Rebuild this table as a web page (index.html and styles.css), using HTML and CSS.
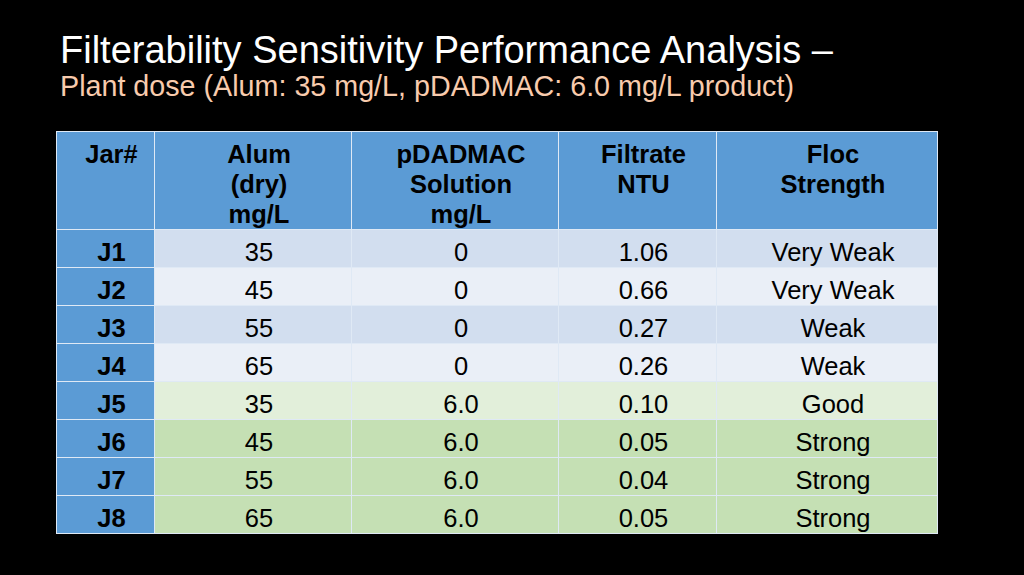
FILE: index.html
```html
<!DOCTYPE html>
<html lang="en">

<head>
    <meta charset="UTF-8">
    <title>Filterability Sensitivity Performance Analysis</title>
    <link rel="stylesheet" href="styles.css">
</head>

<body>
    <div class="slide">
        <div class="slide-title">
            <h1>Filterability Sensitivity Performance Analysis &ndash;</h1>
            <p class="subtitle">Plant dose (Alum: 35 mg/L, pDADMAC: 6.0 mg/L product)</p>
        </div>

        <table class="jar-table">
            <colgroup>
                <col class="c-jar">
                <col class="c-alum">
                <col class="c-poly">
                <col class="c-ntu">
                <col class="c-floc">
            </colgroup>
            <thead>
                <tr>
                    <th>Jar#</th>
                    <th>Alum<br>(dry)<br>mg/L</th>
                    <th>pDADMAC<br>Solution<br>mg/L</th>
                    <th>Filtrate<br>NTU</th>
                    <th>Floc<br>Strength</th>
                </tr>
            </thead>
            <tbody>
                <tr class="row-a"><th>J1</th><td>35</td><td>0</td><td>1.06</td><td>Very Weak</td></tr>
                <tr class="row-b"><th>J2</th><td>45</td><td>0</td><td>0.66</td><td>Very Weak</td></tr>
                <tr class="row-a"><th>J3</th><td>55</td><td>0</td><td>0.27</td><td>Weak</td></tr>
                <tr class="row-b"><th>J4</th><td>65</td><td>0</td><td>0.26</td><td>Weak</td></tr>
                <tr class="row-good"><th>J5</th><td>35</td><td>6.0</td><td>0.10</td><td>Good</td></tr>
                <tr class="row-strong"><th>J6</th><td>45</td><td>6.0</td><td>0.05</td><td>Strong</td></tr>
                <tr class="row-strong"><th>J7</th><td>55</td><td>6.0</td><td>0.04</td><td>Strong</td></tr>
                <tr class="row-strong"><th>J8</th><td>65</td><td>6.0</td><td>0.05</td><td>Strong</td></tr>
            </tbody>
        </table>
    </div>
</body>

</html>
```

FILE: styles.css
```css
body {
    margin: 0;
    background-color: #000;
    font-family: 'Liberation Sans', Arial, sans-serif;
}

.slide {
    width: 1024px;
    height: 575px;
    padding: 32px 0 0 60px;
    box-sizing: border-box;
}

.slide-title h1 {
    margin: 0;
    font-size: 38px;
    font-weight: normal;
    line-height: 36px;
    color: #fff;
}

.subtitle {
    margin: 2px 0 0 0;
    font-size: 28.7px;
    line-height: 32px;
    color: #f8cbad;
}

.jar-table {
    margin: 29px 0 0 -4px;
    width: 881px;
    table-layout: fixed;
    border-collapse: collapse;
    color: #000;
    font-size: 25.5px;
}

.c-jar { width: 98px; }
.c-alum { width: 197px; }
.c-poly { width: 207px; }
.c-ntu { width: 158px; }
.c-floc { width: 221px; }

.jar-table th,
.jar-table td {
    border: 1px solid #dfe9f5;
    padding: 0 0 0 12px;
    text-align: center;
    vertical-align: top;
}

.jar-table thead th {
    height: 90px;
    padding-top: 7px;
    line-height: 30px;
    background-color: #5b9bd5;
    font-weight: bold;
}

.jar-table tbody th,
.jar-table tbody td {
    padding-top: 8px;
    line-height: 29px;
}

.jar-table tbody th {
    background-color: #5b9bd5;
    font-weight: bold;
}

.row-a td { background-color: #d2deef; }
.row-b td { background-color: #eaeff7; }
.row-good td { background-color: #e2efda; }
.row-strong td { background-color: #c5e0b4; }
```
